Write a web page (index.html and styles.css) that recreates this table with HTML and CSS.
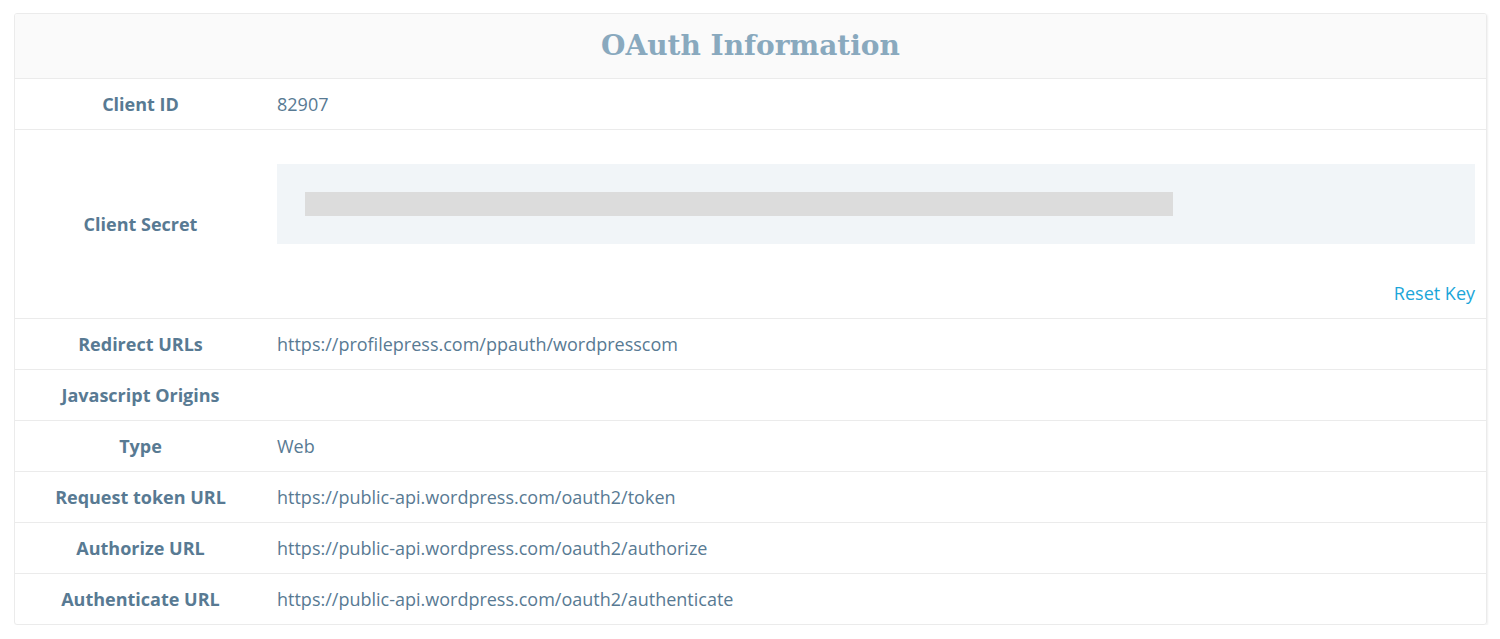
FILE: index.html
```html
<!DOCTYPE html>
<html lang="en">
<head>
    <meta charset="UTF-8">
    <meta name="viewport" content="width=device-width, initial-scale=1.0">
    <title>OAuth Information</title>
    <link rel="stylesheet" href="styles.css">
</head>
<body>
    <div class="card">
        <h2 class="card-title">OAuth Information</h2>

        <div class="row">
            <div class="label">Client ID</div>
            <div class="value">82907</div>
        </div>

        <div class="row">
            <div class="label">Client Secret</div>
            <div class="value secret-cell">
                <div class="secret-box">
                    <div class="secret-mask"></div>
                </div>
                <div class="reset-wrap">
                    <a href="#" class="reset-link">Reset Key</a>
                </div>
            </div>
        </div>

        <div class="row">
            <div class="label">Redirect URLs</div>
            <div class="value">https://profilepress.com/ppauth/wordpresscom</div>
        </div>

        <div class="row">
            <div class="label">Javascript Origins</div>
            <div class="value"></div>
        </div>

        <div class="row">
            <div class="label">Type</div>
            <div class="value">Web</div>
        </div>

        <div class="row">
            <div class="label">Request token URL</div>
            <div class="value">https://public-api.wordpress.com/oauth2/token</div>
        </div>

        <div class="row">
            <div class="label">Authorize URL</div>
            <div class="value">https://public-api.wordpress.com/oauth2/authorize</div>
        </div>

        <div class="row">
            <div class="label">Authenticate URL</div>
            <div class="value">https://public-api.wordpress.com/oauth2/authenticate</div>
        </div>
    </div>
</body>
</html>
```

FILE: styles.css
```css
body {
    margin: 0;
    padding: 13px 13px 0 14px;
    background: #fff;
    font-family: 'Open Sans', sans-serif;
    color: #587a93;
}

.card {
    width: 1471px;
    border: 1px solid #ebebeb;
    border-radius: 3px;
    box-shadow: 1px 1px 2px rgba(0, 0, 0, 0.06);
    overflow: hidden;
}

.card-title {
    margin: 0;
    height: 64px;
    line-height: 64px;
    background: #fafafa;
    text-align: center;
    font-family: 'DejaVu Serif', serif;
    font-weight: bold;
    font-size: 28px;
    color: #89a9be;
}

.row {
    display: grid;
    grid-template-columns: 251px 1fr;
    border-top: 1px solid #ebebeb;
    min-height: 50px;
}

.label {
    display: flex;
    align-items: center;
    justify-content: center;
    font-weight: 700;
    font-size: 18px;
    color: #587a93;
}

.value {
    display: flex;
    align-items: center;
    padding-left: 11px;
    padding-right: 11px;
    font-size: 18px;
    color: #587a93;
}

.secret-cell {
    flex-direction: column;
    align-items: stretch;
    padding-top: 34px;
    padding-bottom: 13px;
}

.secret-box {
    background: #f1f5f8;
    padding: 28px;
}

.secret-mask {
    width: 868px;
    height: 24px;
    background: #dcdcdc;
}

.reset-wrap {
    margin-top: 37px;
    text-align: right;
    line-height: 24px;
}

.reset-link {
    color: #1ba6d9;
    text-decoration: none;
    font-size: 18px;
}
```
